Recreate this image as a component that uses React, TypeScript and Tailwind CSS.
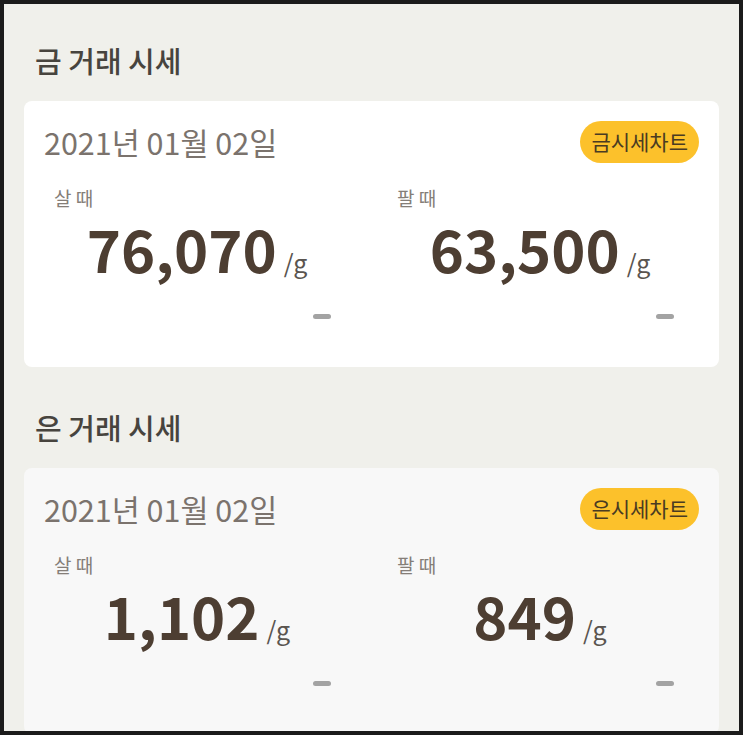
const font = { fontFamily: '"Noto Sans CJK KR", "Noto Sans", sans-serif' };

type Price = { buy: string; sell: string };

function PriceCol({ label, value }: { label: string; value: string }) {
  return (
    <div className="flex flex-col">
      <div className="text-[19px] leading-[26px] text-[#857e78]">{label}</div>
      <div className="mt-[8px] flex items-baseline justify-center">
        <span className="text-[58px] leading-[58px] font-bold text-[#4d3e32]">{value}</span>
        <span className="ml-[7px] text-[25px] leading-[25px] text-[#5a5550]">/g</span>
      </div>
      <div className="mt-[37px] flex justify-end pr-[9px]">
        <div className="h-[5px] w-[18px] rounded-full bg-[#a3a3a3]" />
      </div>
    </div>
  );
}

function Section({ title, chart, price, cardBg }: { title: string; chart: string; price: Price; cardBg: string }) {
  return (
    <section>
      <h2 className="pl-[11px] text-[29px] leading-[40px] font-medium text-[#47443e]">{title}</h2>
      <div className={`mt-[21px] rounded-[8px] ${cardBg} pt-[20px] pb-[48px]`}>
        <div className="flex items-center justify-between pl-[20px] pr-[20px]">
          <div className="text-[30.5px] leading-[42px] text-[#7b736d]">2021년 01월 02일</div>
          <div className="flex h-[42px] items-center rounded-full bg-[#fcc12b] px-[11px] text-[21px] text-[#4a3b22]">
            {chart}
          </div>
        </div>
        <div className="mt-[22px] grid grid-cols-[286px_286px] gap-x-[57px] pl-[30px]">
          <PriceCol label="살 때" value={price.buy} />
          <PriceCol label="팔 때" value={price.sell} />
        </div>
      </div>
    </section>
  );
}

export default function App() {
  return (
    <div style={font} className="h-[735px] w-[743px] overflow-hidden border-[4px] border-[#1b1b1b] bg-[#f0f0eb]">
      <div className="px-[20px] pt-[36px]">
        <Section title="금 거래 시세" chart="금시세차트" price={{ buy: "76,070", sell: "63,500" }} cardBg="bg-white" />
        <div className="h-[40px]" />
        <Section title="은 거래 시세" chart="은시세차트" price={{ buy: "1,102", sell: "849" }} cardBg="bg-[#f8f8f8]" />
      </div>
    </div>
  );
}
